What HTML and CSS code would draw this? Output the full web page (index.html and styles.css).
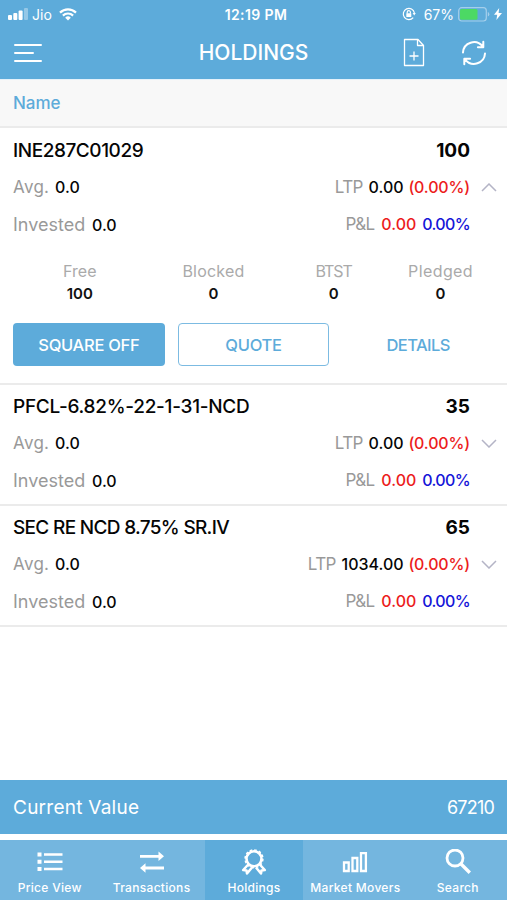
FILE: index.html
```html
<!DOCTYPE html>
<html lang="en">

<head>
    <meta charset="UTF-8">
    <meta name="viewport" content="width=device-width, initial-scale=1.0">
    <title>Holdings</title>
    <link rel="stylesheet" href="styles.css">
</head>

<body>
    <header class="header">
        <div class="status-bar">
            <div class="status-left">
                <svg class="signal" width="21" height="12" viewBox="0 0 21 12" fill="#fff">
                    <rect x="0" y="7" width="4" height="5" rx="1"/>
                    <rect x="5.3" y="5" width="4" height="7" rx="1"/>
                    <rect x="10.6" y="2.5" width="4" height="9.5" rx="1"/>
                    <rect x="16" y="0" width="4" height="12" rx="1" opacity=".35"/>
                </svg>
                <span class="carrier">Jio</span>
                <svg class="wifi" width="18" height="13" viewBox="0 0 18 13" fill="none" stroke="#fff" stroke-width="2.2">
                    <path d="M1 4.6a11.5 11.5 0 0 1 16 0M3.9 7.6a7.2 7.2 0 0 1 10.2 0"/>
                    <path d="M6.2 9.7a4 4 0 0 1 5.6 0L9 12.6z" fill="#fff" stroke="none"/>
                </svg>
            </div>
            <span class="clock">12:19 PM</span>
            <div class="status-right">
                <svg class="lock" width="14" height="14" viewBox="0 0 14 14" fill="none" stroke="#fff" stroke-width="1.2">
                    <path d="M11.2 10.6A5.6 5.6 0 1 1 12.4 6"/>
                    <path d="M10.6 6h3.2l-1.6 2.4z" fill="#fff" stroke="none"/>
                    <path d="M5.2 6.6V5.2a1.6 1.6 0 0 1 3.2 0v1.4"/>
                    <rect x="4.3" y="6.3" width="5" height="3.7" rx=".5" fill="#fff" stroke="none"/>
                </svg>
                <span class="percent">67%</span>
                <svg class="battery" width="32" height="15" viewBox="0 0 32 15">
                    <rect x=".7" y=".7" width="27.6" height="13.3" rx="3" fill="none" stroke="#a5cfeb" stroke-width="1.2"/>
                    <rect x="2" y="2" width="17.5" height="10.7" rx="1.5" fill="#4cd964"/>
                    <path d="M29.8 5v4.6q1.5-.6 1.5-2.3T29.8 5z" fill="#a5cfeb"/>
                </svg>
                <svg class="bolt" width="8" height="12" viewBox="0 0 8 12" fill="#fff">
                    <path d="M5.2 0 0 6.8h3.2L2.4 12 8 4.9H4.6z"/>
                </svg>
            </div>
        </div>
        <div class="nav-bar">
            <svg class="menu" width="30" height="22" viewBox="0 0 30 22" stroke="#fff" stroke-width="2" stroke-linecap="round">
                <path d="M2 3h26M2 11h18M2 19h26"/>
            </svg>
            <h1 class="nav-title">HOLDINGS</h1>
            <div class="nav-actions">
                <svg width="22" height="29" viewBox="0 0 22 29" fill="none" stroke="#fff" stroke-width="1.3" stroke-linejoin="round">
                    <path d="M1.5 1.5h13.5l5.5 6v20h-19z"/>
                    <path d="M14.5 1.5v6h6"/>
                    <path d="M11 13.5v9M6.5 18h9"/>
                </svg>
                <svg width="26" height="26" viewBox="0 0 26 26" fill="none" stroke="#fff" stroke-width="2" stroke-linecap="round" stroke-linejoin="round">
                    <path d="M2 12.5A11 11 0 0 1 21.5 6.2M22.3 1.8v5.4h-5.4"/>
                    <path d="M24 13.5A11 11 0 0 1 4.5 19.8M3.3 24.2v-5.4h5.8"/>
                </svg>
            </div>
        </div>
    </header>

    <div class="column-head">Name</div>

    <main class="holdings">
        <section class="holding open">
            <div class="holding-main">
                <div class="row">
                    <span class="name n1">INE287C01029</span>
                    <span class="qty">100</span>
                </div>
                <div class="row">
                    <span><span class="label avg">Avg.</span> <b class="value">0.0</b></span>
                    <span><span class="label ltp">LTP</span> <b class="value">0.00</b> <b class="change">(0.00%)</b></span>
                </div>
                <div class="row">
                    <span><span class="label invested">Invested</span> <b class="value">0.0</b></span>
                    <span><span class="label pl">P&amp;L</span> <b class="value red">0.00</b> <b class="value blue">0.00%</b></span>
                </div>
                <svg class="chevron" width="16" height="9" viewBox="0 0 16 9"><path d="M1 8l7-7 7 7"/></svg>
            </div>
            <div class="breakdown">
                <div class="cell"><span class="free">Free</span><b>100</b></div>
                <div class="cell"><span class="blocked">Blocked</span><b>0</b></div>
                <div class="cell"><span class="btst">BTST</span><b>0</b></div>
                <div class="cell"><span class="pledged">Pledged</span><b>0</b></div>
            </div>
            <div class="actions">
                <button class="btn btn-fill">SQUARE OFF</button>
                <button class="btn btn-outline">QUOTE</button>
                <button class="btn btn-text">DETAILS</button>
            </div>
        </section>

        <section class="holding">
            <div class="holding-main">
                <div class="row">
                    <span class="name n2">PFCL-6.82%-22-1-31-NCD</span>
                    <span class="qty">35</span>
                </div>
                <div class="row">
                    <span><span class="label avg">Avg.</span> <b class="value">0.0</b></span>
                    <span><span class="label ltp">LTP</span> <b class="value">0.00</b> <b class="change">(0.00%)</b></span>
                </div>
                <div class="row">
                    <span><span class="label invested">Invested</span> <b class="value">0.0</b></span>
                    <span><span class="label pl">P&amp;L</span> <b class="value red">0.00</b> <b class="value blue">0.00%</b></span>
                </div>
                <svg class="chevron" width="16" height="9" viewBox="0 0 16 9"><path d="M1 1l7 7 7-7"/></svg>
            </div>
        </section>

        <section class="holding">
            <div class="holding-main">
                <div class="row">
                    <span class="name n3">SEC RE NCD 8.75% SR.IV</span>
                    <span class="qty">65</span>
                </div>
                <div class="row">
                    <span><span class="label avg">Avg.</span> <b class="value">0.0</b></span>
                    <span><span class="label ltp">LTP</span> <b class="value">1034.00</b> <b class="change">(0.00%)</b></span>
                </div>
                <div class="row">
                    <span><span class="label invested">Invested</span> <b class="value">0.0</b></span>
                    <span><span class="label pl">P&amp;L</span> <b class="value red">0.00</b> <b class="value blue">0.00%</b></span>
                </div>
                <svg class="chevron" width="16" height="9" viewBox="0 0 16 9"><path d="M1 1l7 7 7-7"/></svg>
            </div>
        </section>
    </main>

    <div class="summary">
        <span class="summary-label">Current Value</span>
        <span class="summary-value">67210</span>
    </div>

    <nav class="tabs">
        <a class="tab tab-list">
            <svg width="26" height="26" viewBox="0 0 26 26" fill="#fff">
                <path d="M.5 3.5h4v4h-4zM.5 10.8h4v4h-4zM.5 18h4v4h-4zM7 4.2h18.5v2.6H7zM7 11.5h18.5v2.6H7zM7 18.7h18.5v2.6H7z"/>
            </svg>
            <span>Price View</span>
        </a>
        <a class="tab tab-transfer">
            <svg width="26" height="26" viewBox="0 0 26 26" fill="#fff">
                <path d="M1 5.9h18.500V2.500L25 7.300l-5.500 4.800V8.700H1zM25 17.600H6.500v-3.400L1 19l5.500 4.800v-3.400H25z"/>
            </svg>
            <span>Transactions</span>
        </a>
        <a class="tab active">
            <svg width="26" height="26" viewBox="0 0 26 26" fill="none" stroke="#fff" stroke-linejoin="round">
                <circle cx="13" cy="9.8" r="7.5" stroke-width="2.6"/>
                <circle cx="13" cy="9.8" r="8.9" stroke-width="1.5" stroke-dasharray="2.6 2.06"/>
                <path d="M7.200 15.500l-5 5.500 3.300.500.500 3 5-6M18.800 15.500l5 5.500-3.300.500-.500 3-5-6" stroke-width="2.5"/>
            </svg>
            <span>Holdings</span>
        </a>
        <a class="tab tab-chart">
            <svg width="26" height="26" viewBox="0 0 26 26" fill="none" stroke="#fff" stroke-width="2.3">
                <path d="M2 13.500h4.700V22H2zM10.500 9h4.800v13h-4.800zM19 4.200h4.900V22H19z"/>
            </svg>
            <span>Market Movers</span>
        </a>
        <a class="tab tab-search">
            <svg width="26" height="26" viewBox="0 0 26 26" fill="none" stroke="#fff" stroke-width="2.8">
                <circle cx="10" cy="9" r="8"/>
                <path d="M15.800 14.800l9 9" stroke-width="3.4"/>
            </svg>
            <span>Search</span>
        </a>
    </nav>
</body>

</html>
```
FILE: styles.css
```css
* {
    box-sizing: border-box;
}

body {
    margin: 0;
    height: 900px;
    display: flex;
    flex-direction: column;
    background-color: #fff;
    color: #050505;
    font-family: Inter, "Liberation Sans", sans-serif;
}

svg {
    display: block;
    flex: none;
}

.header {
    height: 79px;
    background-color: #5dabda;
    color: #fff;
}

.status-bar {
    display: grid;
    grid-template-columns: 1fr auto 1fr;
    align-items: center;
    height: 28px;
    padding: 0 5px 0 8px;
    font-size: 14px;
}

.status-left,
.status-right {
    display: flex;
    align-items: center;
}

.status-right {
    justify-content: flex-end;
}

.carrier {
    margin: 0 7px 0 3px;
}

.clock {
    padding-left: 2px;
    font-size: 14px;
    font-weight: 600;
    letter-spacing: 0.4px;
}

.percent {
    margin: 0 4px 0 8px;
}

.bolt {
    margin-left: 4px;
}

.nav-bar {
    display: grid;
    grid-template-columns: 1fr auto 1fr;
    align-items: center;
    height: 49px;
    padding: 0 13px;
}

.nav-title {
    margin: 0;
    font-size: 21px;
    font-weight: 500;
}

.nav-actions {
    display: flex;
    justify-content: flex-end;
    align-items: center;
    gap: 36px;
    padding-right: 7px;
}

.column-head {
    height: 49px;
    padding-left: 13px;
    border-top: 1px solid #e4f1fa;
    border-bottom: 2px solid #ebebeb;
    background-color: #f8f8f8;
    color: #5dabda;
    font-size: 17px;
    font-weight: 500;
    line-height: 47px;
}

.holdings {
    flex: 1;
}

.holding {
    border-bottom: 2px solid #ebebeb;
}

.holding-main {
    position: relative;
    padding: 3px 37px 5px 13px;
}

.open .holding-main {
    padding-top: 4px;
}

.row {
    display: flex;
    justify-content: space-between;
    height: 37px;
    font-size: 17px;
    line-height: 37px;
    white-space: nowrap;
}

.name {
    font-size: 19px;
    font-weight: 500;
}

.n1 {
    letter-spacing: -0.45px;
}

.n2 {
    letter-spacing: -0.28px;
}

.n3 {
    letter-spacing: -0.68px;
}

.qty {
    font-size: 19px;
    font-weight: 700;
}

.label {
    color: #999;
}

.avg {
    margin-right: 1px;
    letter-spacing: 0.3px;
}

.invested {
    margin-right: 2px;
    font-size: 18px;
}

.ltp {
    margin-right: 1px;
    letter-spacing: -0.6px;
}

.pl {
    margin-right: 2px;
    letter-spacing: -0.6px;
}

.value,
.change {
    font-size: 16px;
    font-weight: 500;
}

.change {
    letter-spacing: -0.15px;
}

.change,
.red {
    color: #ec1c1c;
}

.red {
    margin-right: 1px;
}

.blue {
    color: #1414d8;
    letter-spacing: -0.6px;
}

.chevron {
    position: absolute;
    top: 54px;
    right: 10px;
    fill: none;
    stroke: #b4b4c6;
    stroke-width: 1.5;
}

.open .chevron {
    top: 55px;
}

.breakdown {
    display: grid;
    grid-template-columns: 5fr 5fr 4fr 4fr;
    height: 46px;
    margin: 12px 13px 0;
    text-align: center;
}

.cell {
    display: flex;
    flex-direction: column;
    color: #aaa;
    font-size: 16px;
    line-height: 23px;
}

.cell b {
    color: #111;
    font-size: 15px;
    font-weight: 600;
    line-height: 21px;
}

.blocked {
    letter-spacing: 0.2px;
}

.btst {
    letter-spacing: -1px;
}

.pledged {
    letter-spacing: 0.4px;
}

.actions {
    display: grid;
    grid-template-columns: repeat(3, 1fr);
    gap: 13px;
    padding: 17px 13px 17px;
}

.btn {
    height: 43px;
    padding: 0;
    border: 1.5px solid transparent;
    border-radius: 4px;
    background-color: #fff;
    color: #5dabda;
    font-family: inherit;
    font-size: 16.5px;
    font-weight: 500;
    letter-spacing: -0.3px;
}

.btn-fill {
    background-color: #5dabda;
    color: #fff;
}

.btn-outline {
    border-color: #7cbbe2;
}

.btn-text {
    letter-spacing: -0.6px;
}

.summary {
    display: flex;
    justify-content: space-between;
    align-items: center;
    height: 54px;
    padding: 0 13px;
    background-color: #5dabda;
    color: #fff;
    font-size: 18px;
}

.summary-label {
    font-size: 19px;
    letter-spacing: 0.25px;
}

.summary-value {
    letter-spacing: -0.8px;
}

.tabs {
    display: grid;
    grid-template-columns: repeat(5, 1fr);
    height: 60px;
    margin-top: 6px;
    background-color: #74b6df;
    color: #fff;
    font-size: 12px;
    font-weight: 500;
}

.tab {
    display: flex;
    flex-direction: column;
    align-items: center;
    gap: 5px;
    padding-top: 9px;
    white-space: nowrap;
    letter-spacing: 0.3px;
}

.tab-list {
    padding-right: 2px;
}

.tab-transfer {
    padding-right: 1px;
}

.tab-chart {
    padding-left: 1px;
}

.tab-search {
    padding-left: 3px;
}

.active {
    margin: 0 1px 0 2px;
    background-color: #5dabda;
}
```
